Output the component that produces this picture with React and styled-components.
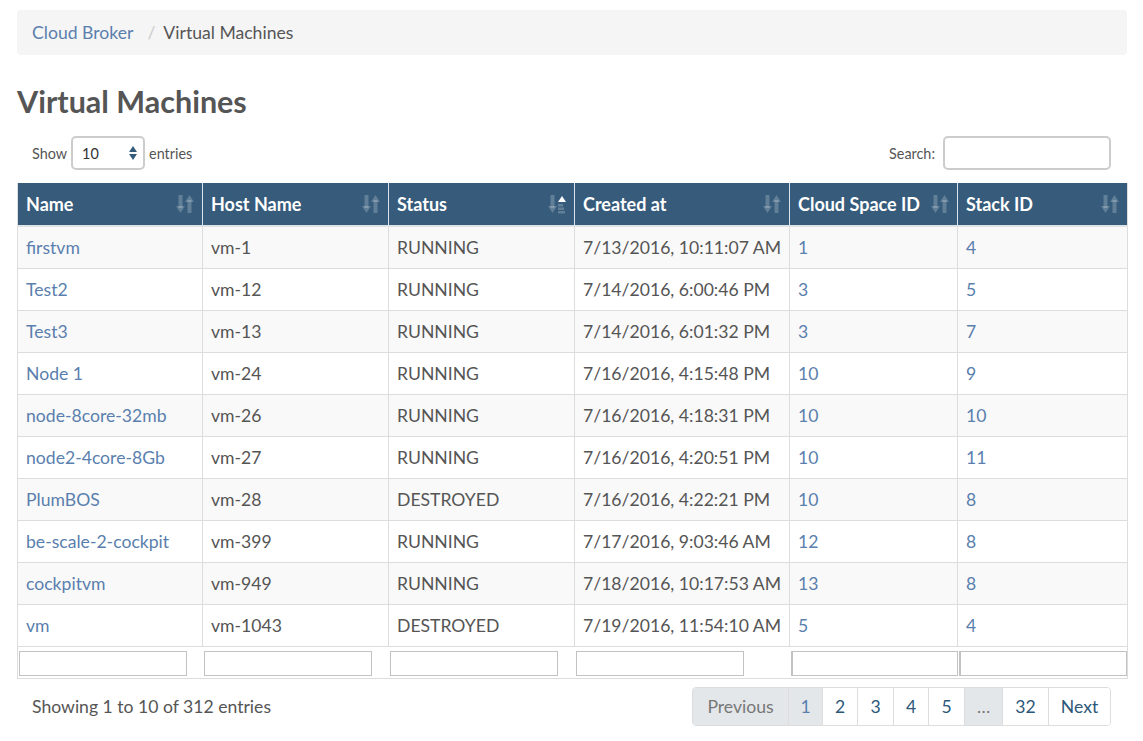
import React from 'react';
import styled, { createGlobalStyle } from 'styled-components';

const GlobalStyle = createGlobalStyle`
  body {
    margin: 0;
    font-family: Lato, 'Open Sans', sans-serif;
    color: #555;
    background: #fff;
  }
  * { box-sizing: border-box; }
`;

const Page = styled.div`
  padding: 10px 16px 0 17px;
`;

const Breadcrumb = styled.ol`
  list-style: none;
  margin: 0;
  padding: 12px 15px;
  height: 45px;
  background: #f5f5f5;
  border-radius: 4px;
  display: flex;
  align-items: center;
  font-size: 17.6px;
  li + li::before {
    content: '/';
    color: #ccc;
    padding: 0 8px 0 14px;
  }
`;

const Crumb = styled.li`
  color: ${(p) => (p.$active ? '#555' : '#5a7fae')};
`;

const Heading = styled.h1`
  margin: 29px 0 0;
  font-size: 30.5px;
  font-weight: 700;
  line-height: 34px;
  color: #555;
`;

const Controls = styled.div`
  margin-top: 18px;
  display: flex;
  justify-content: space-between;
  align-items: center;
  padding: 0 16px 0 15px;
  font-size: 14.4px;
  color: #555;
  height: 34px;
`;

const Label = styled.label`
  display: flex;
  align-items: center;
  gap: 4px;
`;

const SelectBox = styled.div`
  width: 74px;
  height: 34px;
  border: 2px solid #ccc;
  border-radius: 5px;
  display: flex;
  align-items: center;
  justify-content: space-between;
  padding: 0 6px 0 9px;
  font-size: 14.4px;
  color: #333;
  background: #fff;
`;

const SearchInput = styled.input`
  width: 168px;
  height: 34px;
  border: 2px solid #ccc;
  border-radius: 5px;
  margin-left: 4px;
  outline: none;
`;

const Table = styled.table`
  margin-top: 13px;
  width: 1110px;
  border-collapse: collapse;
  table-layout: fixed;
  border: 1px solid #ddd;
  border-top: none;
  font-size: 17.6px;
`;

const Th = styled.th`
  background: #365b7b;
  color: #fff;
  text-align: left;
  font-size: 18px;
  font-weight: 700;
  height: 43px;
  padding: 0 8px 0 8px;
  border-right: 1px solid #dde3ea;
  border-bottom: 2px solid #dfe3e6;
  &:last-child { border-right: none; }
`;

const ThInner = styled.div`
  display: flex;
  align-items: center;
  justify-content: space-between;
`;

const Tr = styled.tr`
  background: ${(p) => (p.$odd ? '#f9f9f9' : '#fff')};
`;

const Td = styled.td`
  height: 42px;
  padding: 0 8px;
  border-top: 1px solid #ddd;
  border-left: 1px solid #ddd;
  color: ${(p) => (p.$link ? '#5a7fae' : '#555')};
  white-space: nowrap;
  &:first-child { border-left: none; }
`;

const FilterCell = styled.td`
  padding: 4px 0 2px 1px;
  height: 31px;
  border-top: 1px solid #ddd;
`;

const FilterInput = styled.input`
  display: block;
  width: ${(p) => (p.$fill ? '100%' : '168px')};
  height: 25px;
  border: 1px solid #c2c2c2;
  ${(p) => p.$fill && 'border-left-width: 2px;'}
  background: #fff;
  outline: none;
`;

const Footer = styled.div`
  margin-top: 8px;
  display: flex;
  justify-content: space-between;
  align-items: center;
  padding: 0 16px 0 15px;
`;

const Info = styled.div`
  font-size: 17.6px;
  color: #555;
`;

const Pager = styled.ul`
  display: flex;
  list-style: none;
  margin: 0;
  padding: 0;
  border: 1px solid #ddd;
  border-radius: 4px;
  overflow: hidden;
`;

const PageItem = styled.li`
  height: 37px;
  min-width: ${(p) => p.$w}px;
  display: flex;
  align-items: center;
  justify-content: center;
  font-size: 17.6px;
  border-left: 1px solid #ddd;
  &:first-child { border-left: none; }
  background: ${(p) => (p.$gray ? '#e4e7ea' : '#fff')};
  color: ${(p) => (p.$muted ? '#777' : p.$current ? '#5a7fae' : '#2d5878')};
`;

const SortIcon = ({ active }) => (
  <svg width="18" height="22" viewBox="0 0 18 22">
    <g fill="rgba(255,255,255,0.22)">
      <rect x="2.5" y="2" width="4" height="13" />
      <polygon points="0,13 9,13 4.5,20" />
      {!active && <rect x="11.5" y="7" width="4" height="13" />}
      {!active && <polygon points="9,9 18,9 13.5,2" />}
      {active && <rect x="10" y="11" width="5" height="2.5" />}
      {active && <rect x="10" y="14.5" width="6" height="2.5" />}
      {active && <rect x="10" y="18" width="7" height="2.5" />}
    </g>
    {active && <polygon points="10,9 18,9 14,3" fill="#fff" />}
  </svg>
);

const SpinArrows = () => (
  <svg width="8" height="14" viewBox="0 0 8 14">
    <polygon points="0,6 8,6 4,0" fill="#345b7a" />
    <polygon points="0,8 8,8 4,14" fill="#345b7a" />
  </svg>
);

const columns = [
  { title: 'Name', w: 185 },
  { title: 'Host Name', w: 186 },
  { title: 'Status', w: 186, active: true },
  { title: 'Created at', w: 215 },
  { title: 'Cloud Space ID', w: 168 },
  { title: 'Stack ID', w: 170 },
];

const rows = [
  ['firstvm', 'vm-1', 'RUNNING', '7/13/2016, 10:11:07 AM', '1', '4'],
  ['Test2', 'vm-12', 'RUNNING', '7/14/2016, 6:00:46 PM', '3', '5'],
  ['Test3', 'vm-13', 'RUNNING', '7/14/2016, 6:01:32 PM', '3', '7'],
  ['Node 1', 'vm-24', 'RUNNING', '7/16/2016, 4:15:48 PM', '10', '9'],
  ['node-8core-32mb', 'vm-26', 'RUNNING', '7/16/2016, 4:18:31 PM', '10', '10'],
  ['node2-4core-8Gb', 'vm-27', 'RUNNING', '7/16/2016, 4:20:51 PM', '10', '11'],
  ['PlumBOS', 'vm-28', 'DESTROYED', '7/16/2016, 4:22:21 PM', '10', '8'],
  ['be-scale-2-cockpit', 'vm-399', 'RUNNING', '7/17/2016, 9:03:46 AM', '12', '8'],
  ['cockpitvm', 'vm-949', 'RUNNING', '7/18/2016, 10:17:53 AM', '13', '8'],
  ['vm', 'vm-1043', 'DESTROYED', '7/19/2016, 11:54:10 AM', '5', '4'],
];

const linkCols = [0, 4, 5];

const pages = [
  { label: 'Previous', w: 95, gray: true, muted: true },
  { label: '1', w: 34, gray: true, current: true },
  { label: '2', w: 35 },
  { label: '3', w: 36 },
  { label: '4', w: 35 },
  { label: '5', w: 36 },
  { label: '…', w: 38, gray: true, muted: true },
  { label: '32', w: 46 },
  { label: 'Next', w: 62 },
];

export default function App() {
  return (
    <Page>
      <GlobalStyle />
      <Breadcrumb>
        <Crumb>Cloud Broker</Crumb>
        <Crumb $active>Virtual Machines</Crumb>
      </Breadcrumb>
      <Heading>Virtual Machines</Heading>
      <Controls>
        <Label>
          Show
          <SelectBox>
            10
            <SpinArrows />
          </SelectBox>
          entries
        </Label>
        <Label>
          Search:
          <SearchInput type="search" />
        </Label>
      </Controls>
      <Table>
        <colgroup>
          {columns.map((c) => (
            <col key={c.title} style={{ width: c.w }} />
          ))}
        </colgroup>
        <thead>
          <tr>
            {columns.map((c) => (
              <Th key={c.title}>
                <ThInner>
                  {c.title}
                  <SortIcon active={c.active} />
                </ThInner>
              </Th>
            ))}
          </tr>
        </thead>
        <tbody>
          {rows.map((r, i) => (
            <Tr key={i} $odd={i % 2 === 0}>
              {r.map((v, j) => (
                <Td key={j} $link={linkCols.includes(j)}>
                  {v}
                </Td>
              ))}
            </Tr>
          ))}
        </tbody>
        <tfoot>
          <tr>
            {columns.map((c, j) => (
              <FilterCell key={c.title}>
                <FilterInput $fill={j >= 4} />
              </FilterCell>
            ))}
          </tr>
        </tfoot>
      </Table>
      <Footer>
        <Info>Showing 1 to 10 of 312 entries</Info>
        <Pager>
          {pages.map((p) => (
            <PageItem
              key={p.label}
              $w={p.w}
              $gray={p.gray}
              $muted={p.muted}
              $current={p.current}
            >
              {p.label}
            </PageItem>
          ))}
        </Pager>
      </Footer>
    </Page>
  );
}
